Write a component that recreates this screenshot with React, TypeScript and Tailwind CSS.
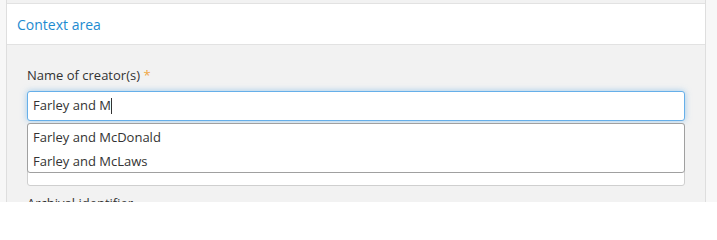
import React from "react";

const suggestions = ["Farley and McDonald", "Farley and McLaws"];

export default function App() {
  return (
    <div
      className="w-[717px] h-[202px] overflow-hidden bg-[#f7f7f7] flex"
      style={{ fontFamily: '"Open Sans", "Liberation Sans", sans-serif' }}
    >
      <div className="ml-[6px] w-[700px] border-l border-r border-[#dedede] bg-[#f2f2f2] flex flex-col pt-[3px]">
        <div className="shrink-0 h-[42px] bg-white border-t border-b border-[#e2e2e2] flex items-center px-[10px]">
          <span className="text-[14px] text-[#1d8bd0]">Context area</span>
        </div>
        <div className="shrink-0 px-[20px] pt-[21px]">
          <label className="block text-[13px] text-[#333] leading-[18px]">
            Name of creator(s) <span className="text-[#f0a541]">*</span>
          </label>
          <div className="mt-[7px] w-[658px] h-[30px] bg-white border border-[#66afe9] rounded-[3px] shadow-[0_0_6px_rgba(102,175,233,0.6)] flex items-center px-[5px] text-[13px] text-[#333]">
            Farley and M<span className="inline-block w-px h-[16px] bg-[#333]" />
          </div>
          <div className="relative mt-[2px] w-[658px] h-[63px] bg-white border border-[#cfcfcf] rounded-[3px]">
            <ul className="absolute -left-px -top-px w-[658px] h-[50px] bg-white border border-[#a0a0a0] rounded-[3px] py-px text-[13px] text-[#333]">
              {suggestions.map((s) => (
                <li key={s} className="px-[5px] h-[24px] leading-[24px]">
                  {s}
                </li>
              ))}
            </ul>
          </div>
          <div className="mt-[8px] text-[13px] text-[#333] leading-[18px]">Archival identifier</div>
        </div>
      </div>
    </div>
  );
}
